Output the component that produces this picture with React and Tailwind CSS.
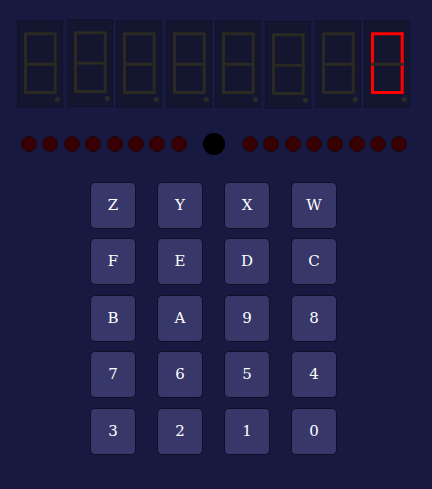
import React from 'react';

// segments: a top, b top-right, c bottom-right, d bottom, e bottom-left, f top-left, g middle
const SEGMENTS = {
  a: [8.5, 13.8, 38.2, 13.8],
  b: [38.2, 13.8, 38.2, 44.3],
  c: [38.2, 44.3, 38.2, 72.5],
  d: [8.5, 72.5, 38.2, 72.5],
  e: [8.5, 44.3, 8.5, 72.5],
  f: [8.5, 13.8, 8.5, 44.3],
  g: [8.5, 44.3, 38.2, 44.3],
};

const displays = [
  { lit: '', dy: 'mt-[1px]' },
  { lit: '', dy: 'mt-0' },
  { lit: '', dy: 'mt-[0.5px]' },
  { lit: '', dy: 'mt-[1px]' },
  { lit: '', dy: 'mt-[1px]' },
  { lit: '', dy: 'mt-[2px]' },
  { lit: '', dy: 'mt-[1px]' },
  { lit: 'abcdef', dy: 'mt-[1px]' },
];

const Digit = ({ lit, dy }) => (
  <div className={`w-[46px] h-[88px] bg-[#14152f] border border-[#10112a] shrink-0 ${dy}`}>
    <svg width="44" height="86" viewBox="1 1 44 86">
      {Object.entries(SEGMENTS).map(([k, [x1, y1, x2, y2]]) => (
        <line
          key={k}
          x1={x1}
          y1={y1}
          x2={x2}
          y2={y2}
          stroke={lit.includes(k) ? '#ff0000' : '#2a2922'}
          strokeWidth="3"
          strokeLinecap="round"
        />
      ))}
      <circle cx="40.3" cy="79.3" r="2.6" fill="#2b2a2a" />
    </svg>
  </div>
);

const Led = () => (
  <div className="w-4 h-4 rounded-full bg-[#380000] border border-[#1c0614]" />
);

const keys = ['Z', 'Y', 'X', 'W', 'F', 'E', 'D', 'C', 'B', 'A', '9', '8', '7', '6', '5', '4', '3', '2', '1', '0'];

export default function App() {
  return (
    <div className="w-[432px] h-[489px] bg-[#171940] overflow-hidden">
      <div className="flex gap-[3.6px] pl-[17px] pt-[19px]">
        {displays.map((d, i) => (
          <Digit key={i} {...d} />
        ))}
      </div>

      <div className="flex items-center pl-[21px] mt-[24px] h-[22px]">
        <div className="flex gap-[5.4px]">
          {Array.from({ length: 8 }).map((_, i) => <Led key={i} />)}
        </div>
        <div className="w-[22px] h-[22px] rounded-full bg-black ml-4" />
        <div className="flex gap-[5.4px] ml-[17px]">
          {Array.from({ length: 8 }).map((_, i) => <Led key={i} />)}
        </div>
      </div>

      <div className="grid grid-cols-[repeat(4,46px)] gap-x-[21px] gap-y-[9.5px] pl-[90px] mt-[26.5px]">
        {keys.map((k) => (
          <button
            key={k}
            className="w-[46px] h-[47px] bg-[#37376a] border border-[#0f1028] rounded-[5px] text-white text-[15px] flex items-center justify-center"
            style={{ fontFamily: '"DejaVu Serif", "Liberation Serif", serif' }}
          >
            {k}
          </button>
        ))}
      </div>
    </div>
  );
}
